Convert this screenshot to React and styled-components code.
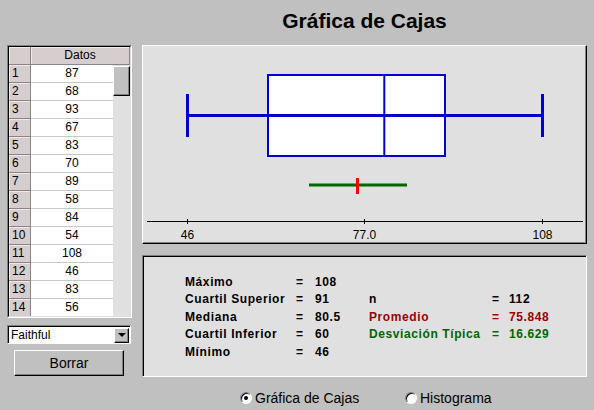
import React from 'react';
import styled, { createGlobalStyle } from 'styled-components';

const GlobalStyle = createGlobalStyle`
  body {
    margin: 0;
    background: #c0c0c0;
    font-family: 'Liberation Sans', Arial, sans-serif;
  }
`;

const datos = [87, 68, 93, 67, 83, 70, 89, 58, 84, 54, 108, 46, 83, 56];

const resumen = [
  { label: 'Máximo', value: '108' },
  { label: 'Cuartil Superior', value: '91', extra: { label: 'n', value: '112', tone: '#000' } },
  { label: 'Mediana', value: '80.5', extra: { label: 'Promedio', value: '75.848', tone: '#990000' } },
  { label: 'Cuartil Inferior', value: '60', extra: { label: 'Desviación Típica', value: '16.629', tone: '#006600' } },
  { label: 'Mínimo', value: '46' },
];

const Page = styled.div`
  width: 594px;
  height: 410px;
  box-sizing: border-box;
  padding-left: 7px;
  display: flex;
  flex-direction: column;
  background: #c0c0c0;
  color: #000;
`;

const Title = styled.h1`
  margin: 0;
  width: 580px;
  height: 45px;
  box-sizing: border-box;
  padding: 9px 0 0 135px;
  font-size: 21px;
  line-height: 24px;
  font-weight: bold;
  text-align: center;
`;

const Main = styled.div`
  display: flex;
  gap: 10px;
  align-items: flex-start;
`;

const Sidebar = styled.div`
  width: 125px;
  display: flex;
  flex-direction: column;
`;

const TableFrame = styled.div`
  border: 1px solid;
  border-color: #808080 #ffffff #ffffff #808080;
`;

const TableInner = styled.div`
  border: 1px solid;
  border-color: #000 #dfdfdf #dfdfdf #000;
  display: flex;
  flex-direction: column;
  font-size: 12px;
`;

const HeaderRow = styled.div`
  display: grid;
  grid-template-columns: 22px 1fr;
  height: 18px;
`;

const HeadCell = styled.div`
  box-sizing: border-box;
  background: #d6cece;
  border-right: 1px solid #8a8484;
  border-bottom: 1px solid #8a8484;
  box-shadow: inset 1px 1px #efeaea;
  text-align: center;
  line-height: 17px;
`;

const Body = styled.div`
  display: flex;
  height: 251px;
  overflow: hidden;
`;

const Rows = styled.div`
  width: 104px;
`;

const Row = styled.div`
  display: grid;
  grid-template-columns: 22px 82px;
  height: 18px;
`;

const NumCell = styled.div`
  box-sizing: border-box;
  background: #d6cece;
  border-right: 1px solid #8a8484;
  border-bottom: 1px solid #8a8484;
  box-shadow: inset 1px 1px #efeaea;
  padding-left: 3px;
  line-height: 17px;
`;

const DataCell = styled.div`
  box-sizing: border-box;
  background: #fff;
  border-bottom: 1px solid #c8c8c8;
  text-align: center;
  line-height: 17px;
`;

const ScrollTrack = styled.div`
  width: 17px;
  background: #e0e0e0;
`;

const ScrollThumb = styled.div`
  margin-top: 1px;
  height: 30px;
  box-sizing: border-box;
  background: #c0c0c0;
  border: 1px solid;
  border-color: #fff #000 #000 #fff;
  box-shadow: inset -1px -1px #808080;
`;

const Select = styled.div`
  margin-top: 7px;
  width: 124px;
  height: 19px;
  box-sizing: border-box;
  display: flex;
  align-items: center;
  justify-content: space-between;
  padding-left: 3px;
  background: #fff;
  border: 1px solid;
  border-color: #808080 #fff #fff #808080;
  box-shadow: inset 1px 1px #000;
  font-size: 12px;
`;

const SelectArrow = styled.span`
  width: 15px;
  height: 15px;
  margin: 1px 1px 0 0;
  box-sizing: border-box;
  display: flex;
  align-items: center;
  justify-content: center;
  background: #c0c0c0;
  border: 1px solid;
  border-color: #fff #000 #000 #fff;
  box-shadow: inset -1px -1px #808080;

  &::after {
    content: '';
    border-left: 4px solid transparent;
    border-right: 4px solid transparent;
    border-top: 4px solid #000;
  }
`;

const Button = styled.button`
  margin: 6px 0 0 7px;
  width: 110px;
  height: 26px;
  padding: 0;
  background: #c0c0c0;
  border: 1px solid;
  border-color: #fff #000 #000 #fff;
  box-shadow: inset -1px -1px #808080;
  font-family: inherit;
  font-size: 14px;
  color: #000;
`;

const Content = styled.div`
  width: 445px;
  display: flex;
  flex-direction: column;
`;

const ChartPanel = styled.div`
  height: 199px;
  box-sizing: border-box;
  background: #e0e0e0;
  border: 1px solid;
  border-color: #fff #000 #000 #fff;
  box-shadow: inset -1px -1px #808080;

  svg {
    display: block;
  }
`;

const StatsPanel = styled.div`
  margin-top: 11px;
  height: 122px;
  box-sizing: border-box;
  padding: 17px 0 0 42px;
  background: #e0e0e0;
  border: 1px solid;
  border-color: #808080 #fff #fff #808080;
  box-shadow: inset 1px 1px #000;
`;

const StatsGrid = styled.div`
  display: grid;
  grid-template-columns: 111px 19px 54px 123px 17px 1fr;
  grid-auto-rows: 17.5px;
  align-items: center;
  font-size: 12px;
  font-weight: bold;
  letter-spacing: 0.6px;
`;

const Stat = styled.span`
  color: ${({ $tone }) => $tone || '#000'};
  white-space: nowrap;
`;

const RadioRow = styled.div`
  margin: 14px 0 0 98px;
  height: 14px;
  display: flex;
  align-items: center;
`;

const RadioOption = styled.label`
  width: 165px;
  display: flex;
  align-items: center;
  gap: 3px;
  font-size: 14px;
`;

const RadioDot = styled.span`
  width: 12px;
  height: 12px;
  box-sizing: border-box;
  border-radius: 50%;
  display: flex;
  align-items: center;
  justify-content: center;
  background: #fff;
  border: 1px solid;
  border-color: #808080 #fff #fff #808080;
  box-shadow: inset 1px 1px #000;

  &::after {
    content: '';
    width: 4px;
    height: 4px;
    border-radius: 50%;
    background: ${({ $checked }) => ($checked ? '#000' : 'transparent')};
  }
`;

// px positions inside the chart panel (scale: 46 -> 44, 108 -> 399)
const BoxChart = () => {
  const blue = '#0000cc';
  return (
    <svg width="442" height="196">
      <rect x="125" y="29" width="177" height="81" fill="#fff" stroke={blue} strokeWidth="2" />
      <line x1="44" y1="69.5" x2="399" y2="69.5" stroke={blue} strokeWidth="3" />
      <line x1="241.3" y1="29" x2="241.3" y2="110" stroke={blue} strokeWidth="2" />
      <line x1="44.5" y1="48" x2="44.5" y2="91" stroke={blue} strokeWidth="3" />
      <line x1="399.5" y1="48" x2="399.5" y2="91" stroke={blue} strokeWidth="3" />

      <line x1="166" y1="139" x2="264" y2="139" stroke="#006600" strokeWidth="3" />
      <line x1="214.5" y1="132" x2="214.5" y2="148" stroke="#ff0000" strokeWidth="3" />

      <line x1="4" y1="175.5" x2="440" y2="175.5" stroke="#000" strokeWidth="1" />
      {[
        [44.5, '46'],
        [221.5, '77.0'],
        [399.5, '108'],
      ].map(([x, t]) => (
        <g key={t}>
          <line x1={x} y1="173" x2={x} y2="178" stroke="#000" strokeWidth="1" />
          <text x={x} y="193" textAnchor="middle" fontSize="12" fontFamily="'Liberation Sans', Arial, sans-serif">
            {t}
          </text>
        </g>
      ))}
    </svg>
  );
};

const App = () => (
  <>
    <GlobalStyle />
    <Page>
      <Title>Gráfica de Cajas</Title>
      <Main>
        <Sidebar>
          <TableFrame>
            <TableInner>
              <HeaderRow>
                <HeadCell />
                <HeadCell>Datos</HeadCell>
              </HeaderRow>
              <Body>
                <Rows>
                  {datos.map((d, i) => (
                    <Row key={i}>
                      <NumCell>{i + 1}</NumCell>
                      <DataCell>{d}</DataCell>
                    </Row>
                  ))}
                </Rows>
                <ScrollTrack>
                  <ScrollThumb />
                </ScrollTrack>
              </Body>
            </TableInner>
          </TableFrame>
          <Select>
            Faithful
            <SelectArrow />
          </Select>
          <Button>Borrar</Button>
        </Sidebar>

        <Content>
          <ChartPanel>
            <BoxChart />
          </ChartPanel>
          <StatsPanel>
            <StatsGrid>
              {resumen.map((r) => (
                <React.Fragment key={r.label}>
                  <Stat>{r.label}</Stat>
                  <Stat>=</Stat>
                  <Stat>{r.value}</Stat>
                  <Stat $tone={r.extra?.tone}>{r.extra?.label}</Stat>
                  <Stat $tone={r.extra?.tone}>{r.extra ? '=' : ''}</Stat>
                  <Stat $tone={r.extra?.tone}>{r.extra?.value}</Stat>
                </React.Fragment>
              ))}
            </StatsGrid>
          </StatsPanel>
          <RadioRow>
            <RadioOption>
              <RadioDot $checked />
              Gráfica de Cajas
            </RadioOption>
            <RadioOption>
              <RadioDot />
              Histograma
            </RadioOption>
          </RadioRow>
        </Content>
      </Main>
    </Page>
  </>
);

export default App;
